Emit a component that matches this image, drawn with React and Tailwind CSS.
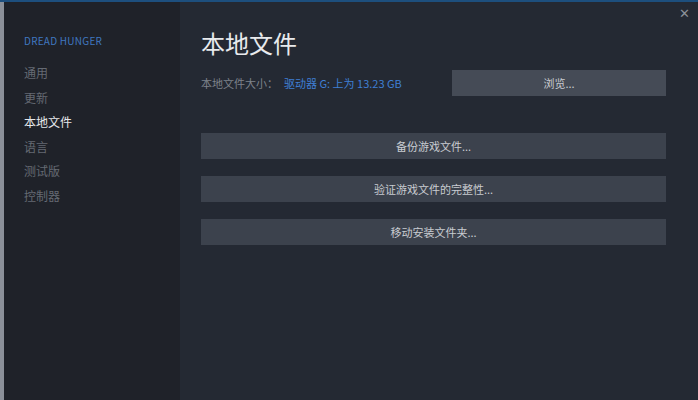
import React from 'react';

const MENU = ['通用', '更新', '本地文件', '语言', '测试版', '控制器'];
const ACTIONS = ['备份游戏文件...', '验证游戏文件的完整性...', '移动安装文件夹...'];

const font = { fontFamily: '"Noto Sans CJK SC", "Liberation Sans", sans-serif' };

export default function App() {
  return (
    <div className="w-[698px] h-[400px] flex flex-col bg-[#23272f] overflow-hidden" style={font}>
      <div className="h-[2px] bg-[#1d4f7e]" />
      <div className="flex flex-1 min-h-0">
        <div className="w-[4px] bg-[#8b9099]" />
        <div className="w-[176px] bg-[#1f2229] pt-[32px] pl-[20px]">
          <div className="text-[10px] tracking-wide text-[#3f78c0] leading-[14px] mb-[13px]">DREAD HUNGER</div>
          <div className="flex flex-col">
            {MENU.map(m => (
              <div
                key={m}
                className={'text-[12px] leading-[24.6px] ' + (m === '本地文件' ? 'text-[#e6e8eb]' : 'text-[#656a73]')}
              >
                {m}
              </div>
            ))}
          </div>
        </div>
        <div className="flex-1 relative bg-[#242933] pl-[21px] pr-[32px] pt-[24px]">
          <button className="absolute top-[4px] right-[8px] text-[#8b9099] text-[13px] leading-none">✕</button>
          <h1 className="text-[24px] leading-[34px] text-[#e8eaed] font-normal">本地文件</h1>
          <div className="flex items-center mt-[10px]">
            <div className="text-[11px] text-[#7d828b]">
              本地文件大小：
              <span className="ml-[6px] text-[#3f7fd4]">驱动器 G: 上为 13.23 GB</span>
            </div>
            <button className="ml-auto w-[214px] h-[26px] bg-[#454b56] text-[11px] text-[#c9ccd1]">浏览...</button>
          </div>
          <div className="flex flex-col gap-[17px] mt-[37px]">
            {ACTIONS.map(a => (
              <button key={a} className="w-full h-[26px] bg-[#3c424d] text-[11px] text-[#c9ccd1]">{a}</button>
            ))}
          </div>
        </div>
      </div>
    </div>
  );
}
